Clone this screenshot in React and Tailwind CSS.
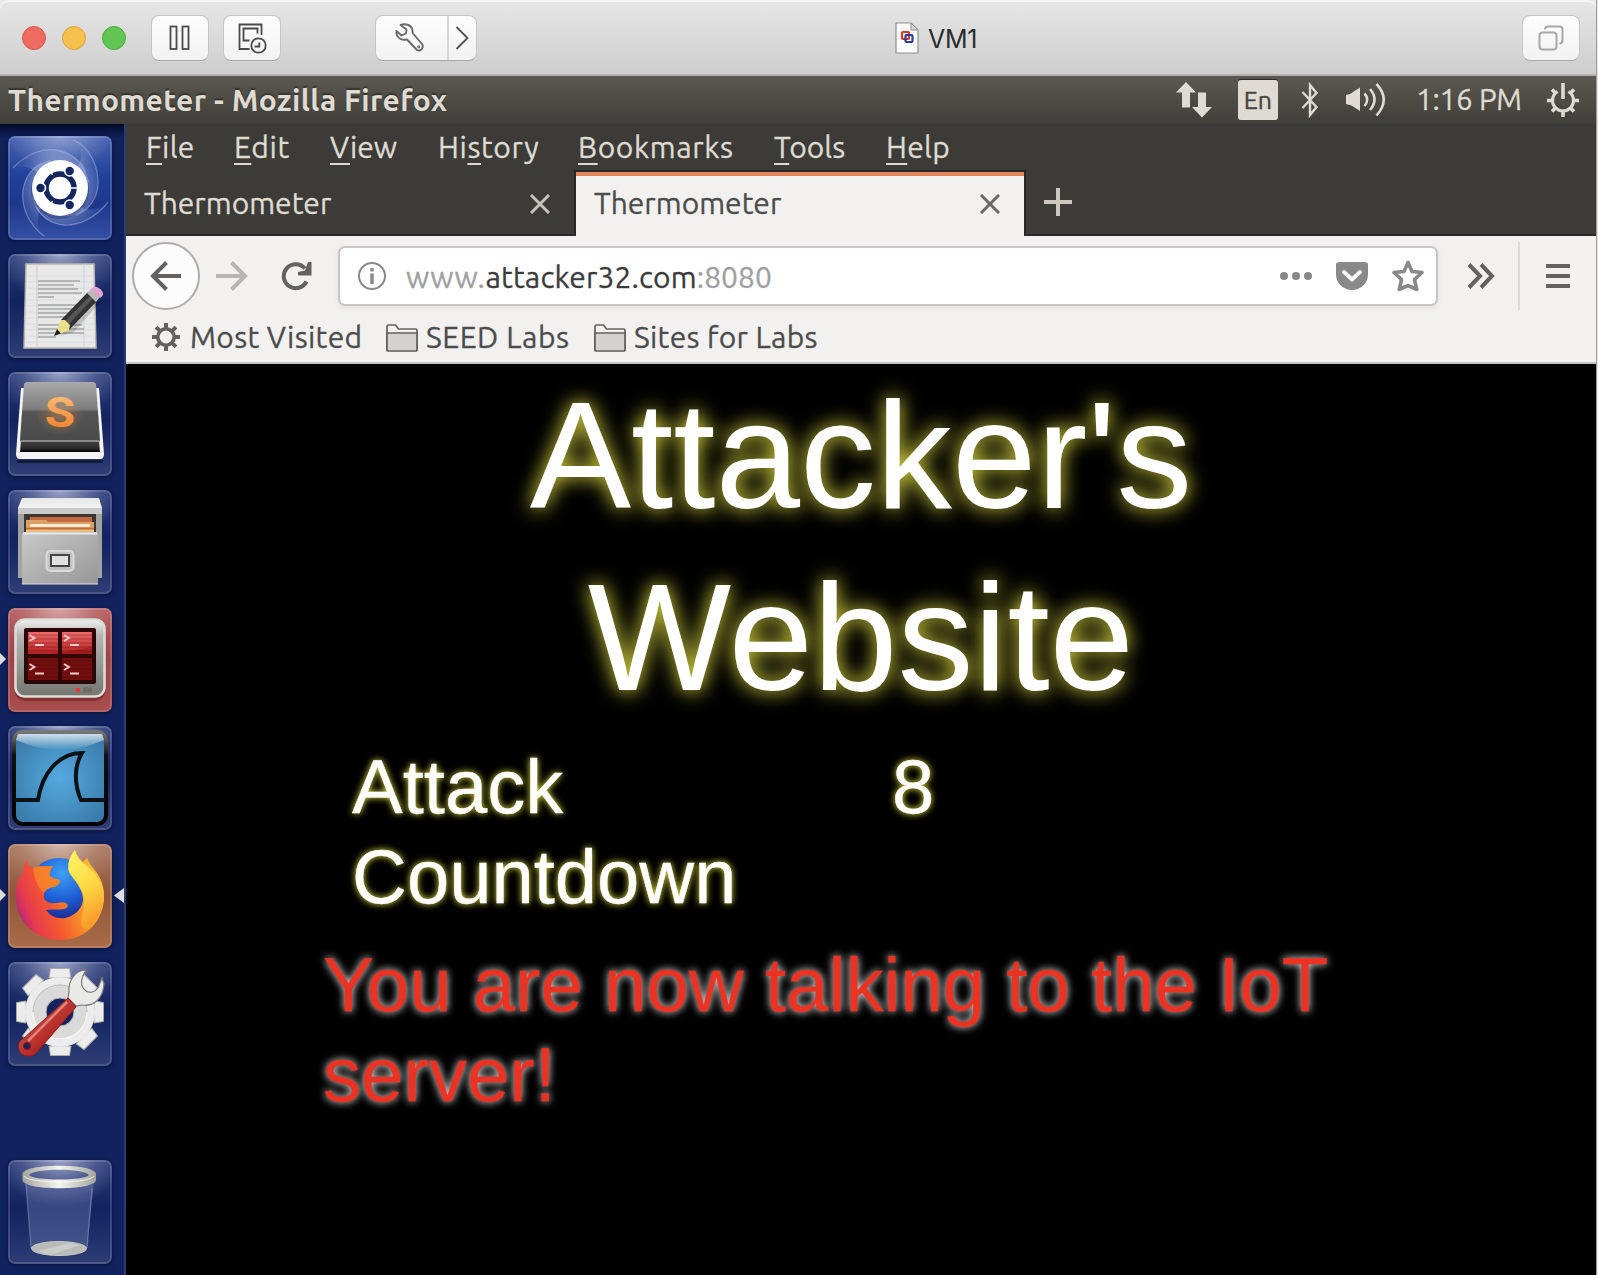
import React from "react";

const MENU = [
  ["", "F", "ile", "w-[88px] tracking-[0.3px]"],
  ["", "E", "dit", "w-[96px] tracking-[0.7px]"],
  ["", "V", "iew", "w-[108px]"],
  ["Hi", "s", "tory", "w-[140px] tracking-[0.6px]"],
  ["", "B", "ookmarks", "w-[196px] tracking-[0.6px]"],
  ["", "T", "ools", "w-[112px]"],
  ["", "H", "elp", "w-[80px] tracking-[0.3px]"],
];

/* ---------- window title bar ---------- */

function MacButton({ className = "", children }) {
  return (
    <div
      className={`flex h-[46px] items-center justify-center rounded-[8px] border border-[#c4c4c4] border-b-[#a9a9a9] bg-gradient-to-b from-[#fdfdfd] to-[#f2f2f2] ${className}`}
    >
      {children}
    </div>
  );
}

function TitleBar() {
  return (
    <div className="flex h-[76px] items-center rounded-t-[9px] border-t-2 border-b-2 border-t-[#f4f4f4] border-b-[#b1b1b1] bg-gradient-to-b from-[#e6e6e6] to-[#cecece] pr-[16px] pl-[22px]">
      <div className="flex gap-4">
        <div className="size-6 rounded-full border border-[#d9564c] bg-[#ee6b60]" />
        <div className="size-6 rounded-full border border-[#dba33a] bg-[#f5c04e]" />
        <div className="size-6 rounded-full border border-[#4dab3f] bg-[#61c654]" />
      </div>
      <MacButton className="ml-[25px] w-[58px]">
        <svg width="22" height="26" viewBox="0 0 22 26" fill="none" stroke="#4a4a4a" strokeWidth="1.8">
          <rect x="1.500" y="1.500" width="6" height="22.500" />
          <rect x="13.500" y="1.500" width="6" height="22.500" />
        </svg>
      </MacButton>
      <MacButton className="ml-[14px] w-[58px]">
        <svg width="30" height="32" viewBox="0 0 30 32" fill="none" stroke="#4a4a4a" strokeWidth="1.8">
          <path d="M24.500 13V2.500H2.500V27h10M20.500 11.500V6.500H6.500V18.500h6" />
          <circle cx="21.500" cy="23.500" r="7.200" />
          <path d="M22.300 20.500V24.500H17.500" />
        </svg>
      </MacButton>
      <MacButton className="ml-[94px] w-[102px]">
        <div className="flex h-full w-[71px] items-center justify-center pr-[3px]">
          <svg width="30" height="30" viewBox="0 0 30 30" fill="none" stroke="#6a6a6a" strokeWidth="1.9" strokeLinejoin="round">
            <path d="M5.500 2C10 .300 16 1.500 17.300 6.500C17.800 8.500 17.300 9.500 18 10.500L27 21C29.300 24.500 25.500 29 22 27L12 16.500C5.500 18 .500 13.500 1.500 8L6.500 12.500L11 10.500L11.500 6.500Z" />
            <circle cx="23.800" cy="23.700" r=".6" />
          </svg>
        </div>
        <div className="flex h-full flex-1 items-center border-l-2 border-[#d6d6d6] pl-[6px]">
          <svg width="14" height="24" viewBox="0 0 14 24" fill="none" stroke="#4f4f4f" strokeWidth="1.8">
            <path d="M1.500 1L12.500 12L1.500 23" />
          </svg>
        </div>
      </MacButton>
      <svg className="ml-[418px]" width="24" height="32" viewBox="0 0 24 32">
        <path d="M1 1H16L23 8V31H1Z" fill="#fdfdfd" stroke="#8f8f8f" strokeWidth="1.200" />
        <path d="M16 1V8H23Z" fill="#d8d8d8" stroke="#8f8f8f" strokeWidth="1" />
        <rect x="7" y="10" width="7" height="7" rx="1" fill="none" stroke="#d8392b" strokeWidth="2.200" />
        <rect x="10.500" y="13" width="7" height="7" rx="1" fill="none" stroke="#24408e" strokeWidth="2.200" />
      </svg>
      <div className="mt-[3px] ml-[9px] font-['Inter',sans-serif] text-[25px] tracking-[-0.3px] text-[#2c2c2c]">VM1</div>
      <MacButton className="ml-auto w-[58px]">
        <svg width="26" height="26" viewBox="0 0 26 26" fill="none" stroke="#a8a8a8" strokeWidth="2">
          <rect x="1.500" y="7.500" width="17" height="17" rx="3" />
          <path d="M7 4.500C7 2.500 8.500 1.500 10 1.500H21.500C23.500 1.500 24.500 2.500 24.500 4.500V15C24.500 17 23.500 18.500 21.500 18.500" />
        </svg>
      </MacButton>
    </div>
  );
}

/* ---------- Unity top panel ---------- */

function TopPanel() {
  return (
    <div className="flex h-12 items-center bg-gradient-to-b from-[#5b5950] to-[#403f3a] pl-[8px] text-[30px] text-[#dfdbd2]">
      <div className="w-[460px] font-bold tracking-[0.38px] whitespace-nowrap [text-shadow:0_-2px_1px_rgba(20,20,20,.45)]">
        Thermometer - Mozilla Firefox
      </div>
      <svg className="ml-[708px]" width="36" height="36" viewBox="0 0 36 36" fill="#dfdbd2">
        <path d="M10 0L20 10.500H14V25.500H6V10.500H0Z" />
        <path d="M26 35.500L16 25H22V10.500H30V25H36Z" />
      </svg>
      <div className="ml-[26px] flex h-10 w-10 items-center justify-center rounded-[3px] bg-[#dfdbd2] pt-[2px] text-[25px] text-[#47463f] shadow-[0_-1px_0_#2b2a26] [-webkit-text-stroke:.4px]">
        En
      </div>
      <svg className="ml-[23px]" width="18" height="36" viewBox="0 0 18 36" fill="none" stroke="#dfdbd2" strokeWidth="2.400">
        <path d="M1.500 10L15.500 25L9 33V3L15.500 11L1.500 26" />
      </svg>
      <svg className="ml-[27px]" width="42" height="36" viewBox="0 0 42 36">
        <path d="M0 13C2.500 12.500 5 12 7 10L14 5.500V29L7 24.500C5 23 2.500 22.500 0 22Z" fill="#dfdbd2" />
        <g fill="none" stroke="#dfdbd2" strokeWidth="2.600">
          <path d="M18.500 11.500Q24 17.500 18.500 24" />
          <path d="M24 7Q33 17.500 24 28" />
          <path d="M30.500 2Q45 17.500 30.500 33.500" />
        </g>
      </svg>
      <div className="ml-[28px] w-[108px] text-[29.5px] tracking-[-0.2px] whitespace-nowrap [-webkit-text-stroke:.3px]">1:16 PM</div>
      <svg className="ml-[22px]" width="34" height="36" viewBox="0 0 34 36">
        <path d="M11.500 9.500A10.500 10.500 0 1 0 22.500 9.500" fill="none" stroke="#dfdbd2" strokeWidth="3.200" />
        <path d="M17 1V17M17 29V35M1 18.500H7M27 18.500H33M6 7.500L9 10.500M28 7.500L25 10.500M6 29.500L9 26.500M28 29.500L25 26.500" fill="none" stroke="#dfdbd2" strokeWidth="3.600" />
      </svg>
    </div>
  );
}

/* ---------- launcher ---------- */

const TILE_BG = {
  blue: "bg-[radial-gradient(ellipse_50%_35%_at_50%_0%,rgba(200,210,240,.55),transparent_100%),linear-gradient(#4862ae_0%,#20409a_40%,#1d378c_65%,#3550a4_100%)]",
  navy: "bg-[radial-gradient(ellipse_60%_45%_at_50%_0%,rgba(190,198,225,.75),rgba(150,160,200,.28)_60%,transparent_100%),linear-gradient(#2c3c78_0%,#122360_45%,#1c2d69_70%,#2f3e74_100%)]",
  red: "bg-[radial-gradient(ellipse_60%_45%_at_50%_0%,rgba(225,190,190,.75),rgba(210,150,150,.3)_60%,transparent_100%),linear-gradient(#b05a5c,#9d4346_50%,#a84c4d)]",
  brown: "bg-[radial-gradient(ellipse_60%_45%_at_50%_0%,rgba(225,205,195,.75),rgba(200,165,150,.3)_60%,transparent_100%),linear-gradient(#a8765f,#8f5638_50%,#a96c49)]",
};

function Tile({ bg, left, right, children }) {
  return (
    <div className="relative flex h-[104px] w-[124px] shrink-0 pl-[8px]">
      {left && (
        <svg className="absolute top-[45px] left-0" width="6" height="12" viewBox="0 0 6 12">
          <path d="M0 0L6 6L0 12Z" fill="#dedede" />
        </svg>
      )}
      <div className={`size-[104px] rounded-[7px] shadow-[inset_0_0_0_2px_rgba(255,255,255,.14),0_1px_4px_rgba(0,0,20,.5)] ${TILE_BG[bg]}`}>
        <svg width="104" height="104" viewBox="0 0 104 104">{children}</svg>
      </div>
      {right && (
        <svg className="absolute top-[44px] right-0" width="10" height="15" viewBox="0 0 10 15">
          <path d="M10 0L0 7.500L10 15Z" fill="#dedede" />
        </svg>
      )}
    </div>
  );
}

function DashIcon() {
  return (
    <g>
      <defs>
        <radialGradient id="swirl" gradientUnits="userSpaceOnUse" cx="52" cy="52" r="50">
          <stop offset=".3" stopColor="#dfe6fa" stopOpacity=".55" />
          <stop offset=".8" stopColor="#c5d0f2" stopOpacity=".12" />
          <stop offset="1" stopColor="#c5d0f2" stopOpacity="0" />
        </radialGradient>
      </defs>
      <g fill="url(#swirl)">
        <path d="M5 32C18 18 34 12 48 14C66 17 78 30 81 46L52 52L26 34C18 30 10 30 5 32Z" />
        <path d="M66 4C82 12 91 30 90 50C88 68 76 78 60 81L52 52L70 30C76 20 72 10 66 4Z" />
        <path d="M100 66C88 82 70 90 56 89C38 88 27 76 24 60L52 52L74 72C84 76 94 72 100 66Z" />
        <path d="M36 100C20 88 13 70 15 54C17 38 28 28 42 24L52 52L32 74C28 84 30 94 36 100Z" />
      </g>
      <g fill="none" stroke="#c2cdf0" strokeOpacity=".4" strokeWidth="1.300">
        <path d="M5 32C18 18 34 12 48 14C62 16 73 25 78 36" />
        <path d="M66 4C82 12 91 30 90 50C88 66 78 75 68 79" />
        <path d="M100 66C88 82 70 90 56 89C44 88 34 81 28 71" />
        <path d="M36 100C20 88 13 70 15 54C17 42 24 32 34 27" />
      </g>
      <circle cx="52" cy="54" r="29" fill="#15265f" opacity=".35" />
      <circle cx="52" cy="52" r="28" fill="#fff" />
      <circle cx="52" cy="52" r="14" fill="none" stroke="#14265f" strokeWidth="5.500" />
      <path d="M44.500 39L42.500 35.500M44.500 65L42.500 68.500" stroke="#fff" strokeWidth="1.500" />
      <g fill="#14265f" stroke="#fff" strokeWidth="1.600">
        <circle cx="32.500" cy="52" r="5" />
        <circle cx="61.700" cy="35" r="5" />
        <circle cx="61.700" cy="69" r="5" />
      </g>
      <path d="M63 52H71" stroke="#fff" strokeWidth="1.500" />
    </g>
  );
}

function EditorIcon() {
  const rows = [26, 30, 34, 38, 42, 50, 54, 58, 62, 70, 74, 78, 82];
  const len = [42, 36, 40, 44, 16, 42, 34, 36, 30, 44, 46, 46, 18];
  return (
    <g>
      <path d="M18 10H86L88 94H16Z" fill="#e8e8e6" stroke="#b9b5ad" strokeWidth="1.500" />
      <path d="M19 22H85M19 28H85M19 34H85M19 40H85M19 46H85M19 52H85M19 58H85M18 64H86M18 70H86M18 76H86M18 82H86M18 88H86" stroke="#d3dbe8" strokeWidth=".8" />
      <path d="M29 11V93" stroke="#e6c9cb" strokeWidth="1.200" />
      <path d="M76 11V93" stroke="#cdd6e8" strokeWidth="1.200" />
      {rows.map((y, i) => (
        <path key={y} d={`M30 ${y + 1}h${len[i]}`} stroke="#a6a6a4" strokeWidth="1.500" />
      ))}
      <path d="M52 82L66 78L92 48L86 44Z" fill="#000" opacity=".16" />
      <path d="M47 81L53 66L61 76Z" fill="#e8d97b" />
      <path d="M53 66L80 38L89 47L61 76Z" fill="#333" />
      <path d="M56 68L83 41L85.500 44L59 72Z" fill="#565656" />
      <path d="M53 66L57 66L62 71L61 76L51 80L49 76Z" fill="#ecdf8c" />
      <path d="M46 82L49 75L53 79.500Z" fill="#222" />
      <path d="M79 39L83 35L92 43L88 48Z" fill="#b9b9b9" />
      <path d="M83 35C86 31 91 33 94 37C96 40 95 42 92 44Z" fill="#e3a3cc" />
    </g>
  );
}

function SublimeIcon() {
  return (
    <g>
      <defs>
        <linearGradient id="keyTop" x1="0" y1="0" x2="0" y2="1">
          <stop offset="0" stopColor="#a9a9a9" />
          <stop offset=".45" stopColor="#7d7d7d" />
          <stop offset=".5" stopColor="#545454" />
          <stop offset="1" stopColor="#4a4a4a" />
        </linearGradient>
        <linearGradient id="keyFront" x1="0" y1="0" x2="0" y2="1">
          <stop offset="0" stopColor="#444" />
          <stop offset=".7" stopColor="#2a2a2a" />
          <stop offset="1" stopColor="#000" />
        </linearGradient>
        <linearGradient id="keyS" x1="0" y1="0" x2="0" y2="1">
          <stop offset="0" stopColor="#fbc98a" />
          <stop offset="1" stopColor="#f2761b" />
        </linearGradient>
        <radialGradient id="keyGlow">
          <stop offset="0" stopColor="#e0924a" stopOpacity=".45" />
          <stop offset="1" stopColor="#e0924a" stopOpacity="0" />
        </radialGradient>
      </defs>
      <path d="M10 88H94L95 91H9Z" fill="#000" opacity=".5" />
      <path d="M13 16H91L96 82Q96 87 92 87H12Q8 87 8 82Z" fill="#f4f4f4" />
      <path d="M13 68H91L92 80H12Z" fill="url(#keyFront)" />
      <path d="M18 10H86L88 12L92 68L91 70H13L12 68L16 12Z" fill="url(#keyTop)" />
      <path d="M13 69H91" stroke="#8a8a8a" strokeWidth="2" />
      <ellipse cx="52" cy="43" rx="24" ry="20" fill="url(#keyGlow)" />
      <text transform="translate(52 54.500) scale(1.15 1)" x="0" y="0" textAnchor="middle" fontFamily="Roboto, sans-serif" fontWeight="700" fontSize="43" fill="url(#keyS)">S</text>
    </g>
  );
}

function FilesIcon() {
  return (
    <g>
      <defs>
        <linearGradient id="cabFront" x1="0" y1="0" x2="1" y2="1">
          <stop offset="0" stopColor="#c9c9c9" />
          <stop offset="1" stopColor="#979797" />
        </linearGradient>
        <linearGradient id="cabLid" x1="0" y1="0" x2="0" y2="1">
          <stop offset="0" stopColor="#e6e6e6" />
          <stop offset="1" stopColor="#f4f4f4" />
        </linearGradient>
      </defs>
      <path d="M10 18H94V88H10Z" fill="#a3a3a3" />
      <path d="M14 8H91L94 18H10Z" fill="url(#cabLid)" />
      <path d="M10 18H94V24H10Z" fill="#c9c9c9" />
      <rect x="16" y="24" width="72" height="20" fill="#3b3735" />
      <path d="M22 27H84V44H20Z" fill="#c46a42" />
      <path d="M18 30H38L40 32H86V44H18Z" fill="#dba160" />
      <path d="M22 35.500H82" stroke="#fff6ea" strokeWidth="2.500" />
      <path d="M18 38.500H86" stroke="#c96a3e" strokeWidth="1.500" />
      <path d="M18 40H86V44H18Z" fill="#e9bf82" />
      <path d="M16 42H88L90 45V94H14V45Z" fill="url(#cabFront)" />
      <path d="M15 43.500H89" stroke="#e8e8e8" strokeWidth="2" />
      <path d="M14 94H90" stroke="#dedede" strokeWidth="1" />
      <rect x="38.500" y="61" width="27" height="20" rx="4" fill="#c2c2c2" stroke="#dadada" strokeWidth="2" />
      <rect x="43" y="65" width="18" height="11" fill="#e0e0e0" stroke="#444" strokeWidth="2" />
    </g>
  );
}

function TerminatorIcon() {
  return (
    <g>
      <defs>
        <linearGradient id="bezel" x1="0" y1="0" x2="0" y2="1">
          <stop offset="0" stopColor="#f2f2f0" />
          <stop offset=".2" stopColor="#b5b6b2" />
          <stop offset="1" stopColor="#74766f" />
        </linearGradient>
        <linearGradient id="termA" x1="0" y1="0" x2="0" y2="1">
          <stop offset="0" stopColor="#ee6a6a" />
          <stop offset="1" stopColor="#b31f1f" />
        </linearGradient>
      </defs>
      <rect x="7" y="13" width="90" height="80" rx="10" fill="#400" opacity=".35" />
      <rect x="7.500" y="11.500" width="89" height="77" rx="9" fill="url(#bezel)" stroke="#dddeda" strokeWidth="2.500" />
      <rect x="16" y="20" width="72" height="56" rx="2" fill="#2c0606" />
      <rect x="20" y="24" width="30" height="22" fill="url(#termA)" />
      <rect x="54" y="24" width="30" height="22" fill="url(#termA)" />
      <rect x="20" y="50" width="30" height="22" fill="#7a1313" />
      <rect x="54" y="50" width="30" height="22" fill="#7a1313" />
      <path d="M20 27h64M20 31h64M20 35h64M20 39h64M20 43h64M20 53h64M20 57h64M20 61h64M20 65h64M20 69h64" stroke="#3a0505" strokeOpacity=".3" strokeWidth="1" />
      <path d="M20 50L84 39V72H20Z" fill="#500" opacity=".22" />
      <g fill="none" stroke="#f6caca" strokeWidth="1.800">
        <path d="M21.500 27l5 3l-5 3M27 37h9M56 27l5 3l-5 3M62 37h9M21.500 56l5 3l-5 3M27 65.500h9M56 56l5 3l-5 3M62 65.500h9" />
      </g>
      <rect x="68" y="80" width="4" height="4" fill="#e23b30" />
      <rect x="75" y="79.500" width="9" height="5" rx="1" fill="#6b6c67" />
    </g>
  );
}

function WiresharkIcon() {
  return (
    <g>
      <defs>
        <radialGradient id="sea" cx=".5" cy=".5" r=".6">
          <stop offset="0" stopColor="#55a9de" />
          <stop offset="1" stopColor="#3a7cab" />
        </radialGradient>
        <linearGradient id="gloss" x1="0" y1="0" x2="0" y2="1">
          <stop offset="0" stopColor="#fff" stopOpacity=".75" />
          <stop offset="1" stopColor="#fff" stopOpacity="0" />
        </linearGradient>
        <linearGradient id="sharkEdge" x1="0" y1="0" x2="0" y2="1">
          <stop offset="0" stopColor="#777" />
          <stop offset=".25" stopColor="#111" />
          <stop offset="1" stopColor="#000" />
        </linearGradient>
      </defs>
      <rect x="6" y="6" width="92" height="92" rx="9" fill="url(#sea)" stroke="url(#sharkEdge)" strokeWidth="4" />
      <path d="M10 8H94L96 14Q52 34 8 14Z" fill="url(#gloss)" />
      <path d="M7 74H30C34 48 50 27 74 27C66 40 66 58 73 74H97" fill="none" stroke="#0c1116" strokeWidth="4" />
    </g>
  );
}

function FirefoxIcon() {
  return (
    <g>
      <defs>
        <radialGradient id="globe" cx=".55" cy=".25" r=".8">
          <stop offset="0" stopColor="#3fa0f5" />
          <stop offset=".5" stopColor="#1f62d8" />
          <stop offset="1" stopColor="#1b1f86" />
        </radialGradient>
        <linearGradient id="fox" x1="0" y1=".65" x2="1" y2=".25">
          <stop offset="0" stopColor="#b5287c" />
          <stop offset=".12" stopColor="#e63a4e" />
          <stop offset=".35" stopColor="#f4582f" />
          <stop offset=".65" stopColor="#fb9a28" />
          <stop offset="1" stopColor="#fdc93a" />
        </linearGradient>
        <linearGradient id="tail" x1="0" y1="0" x2=".3" y2="1">
          <stop offset="0" stopColor="#fff56a" />
          <stop offset=".55" stopColor="#fddb45" />
          <stop offset="1" stopColor="#faa02d" />
        </linearGradient>
      </defs>
      <circle cx="51" cy="45" r="31" fill="url(#globe)" />
      <path
        d="M19 16C19 20 21 23 25 24C31 21 38 23 45 22C42 26 41 29 42 32C45 35 49 35 52 36C52 40 49 42 46 43C42 43 37 46 36 50C35 55 38 58 43 59C48 60 53 57 58 59C61 61 60 64 56 65C50 66 44 65 38 66C42 72 49 75 57 74C67 72 74 65 75 56C75 45 66 36 61 28C59 21 61 13 67 6C69 11 71 15 75 18L79 14C81 18 83 22 86 25C93 33 97 45 96 54C95 79 76 96 53 96C28 96 9 79 8 55C7 43 10 34 15 29C15 24 16 19 19 16Z"
        fill="url(#fox)"
      />
      <path d="M25 24C31 21 38 23 45 22C42 26 41 29 42 32C45 35 49 35 52 36C52 40 49 42 46 43C42 43 38 45 36 49C30 44 26 34 25 24Z" fill="#f58a2c" opacity=".75" />
      <path d="M67 6C69 13 72 17 78 21C91 32 96 43 96 54C95 66 90 76 80 84C72 86 72 80 75 68C77 60 76 52 75 50C72 40 64 34 61 28C59 21 61 13 67 6Z" fill="url(#tail)" />
    </g>
  );
}

function SettingsIcon() {
  const teeth = [0, 45, 90, 135, 180, 225, 270, 315];
  return (
    <g>
      <defs>
        <linearGradient id="handle" x1="0" y1="0" x2="1" y2="1">
          <stop offset="0" stopColor="#e06a60" />
          <stop offset=".6" stopColor="#b32a25" />
          <stop offset="1" stopColor="#7e1714" />
        </linearGradient>
      </defs>
      <g transform="translate(52 50)">
        {teeth.map((a) => (
          <path key={a} d="M-11 -34L-9.500 -43.500H9.500L11 -34Z" fill="#ececec" stroke="#a9a9a9" strokeWidth="1" transform={`rotate(${a})`} />
        ))}
        <circle r="35" fill="#ececec" />
        <circle r="27" fill="#dadada" stroke="#bdbdbd" strokeWidth="1" />
        <path d="M-27 0A27 27 0 0 0 27 0" fill="none" stroke="#f7f7f7" strokeWidth="1.500" />
        <circle r="14" fill="#122360" stroke="#b5b5b5" strokeWidth="1" />
      </g>
      <path d="M78 8C68 8 60 18 61 30L60 36L68 44L74 43C86 45 95 36 96 22L94 16L90 26C86 31 80 32 76 27C72 23 73 15 78 8Z" fill="#e9e9e7" stroke="#7d7d7b" strokeWidth="1.200" />
      <path d="M60 36L68 45L29 90C25 96 15 95 12 90C9 85 10 79 16 76Z" fill="url(#handle)" stroke="#8d1f1b" strokeWidth="1" />
      <path d="M59 40L20 79" stroke="#f0a097" strokeWidth="2.500" opacity=".7" />
      <circle cx="19" cy="84" r="3.500" fill="#1a2557" stroke="#7e1714" strokeWidth="1" />
    </g>
  );
}

function TrashIcon() {
  return (
    <g>
      <defs>
        <linearGradient id="rim" x1="0" y1="0" x2="1" y2="0">
          <stop offset="0" stopColor="#a3a39d" />
          <stop offset=".5" stopColor="#f5f5f2" />
          <stop offset="1" stopColor="#a3a39d" />
        </linearGradient>
      </defs>
      <path d="M18 22L23 88Q51 100 79 88L86 22Z" fill="#8f9bcb" opacity=".3" />
      <path d="M18 24L23 88M84 28L79 88" stroke="#aab4d8" strokeWidth="1.300" opacity=".4" />
      <ellipse cx="51" cy="88.500" rx="27.500" ry="7" fill="#b9bbb8" stroke="#c6c7c4" strokeWidth="1" />
      <path d="M30 91L62 83L72 85L42 95Z" fill="#d3d4d2" opacity=".7" />
      <path fillRule="evenodd" d="M14.500 14C14.500 3 88 3 88 14V20C88 31 14.500 31 14.500 20ZM21 15C26 21 76 21 81 15C76 8 26 8 21 15Z" fill="url(#rim)" />
      <path d="M16 16C20 24 82 24 86 16" fill="none" stroke="#fff" strokeWidth="1" opacity=".7" />
    </g>
  );
}

function Launcher() {
  return (
    <div className="flex w-[126px] shrink-0 flex-col gap-[14px] border-r-2 border-[#2d3c6e] bg-[linear-gradient(#040a2a_0px,#10215c_14px,#10225f_100%)] pt-[12px] pb-[11px]">
      <Tile bg="blue"><DashIcon /></Tile>
      <Tile bg="navy"><EditorIcon /></Tile>
      <Tile bg="navy"><SublimeIcon /></Tile>
      <Tile bg="navy"><FilesIcon /></Tile>
      <Tile bg="red" left><TerminatorIcon /></Tile>
      <Tile bg="navy"><WiresharkIcon /></Tile>
      <Tile bg="brown" left right><FirefoxIcon /></Tile>
      <Tile bg="navy"><SettingsIcon /></Tile>
      <div className="mt-auto">
        <Tile bg="navy"><TrashIcon /></Tile>
      </div>
    </div>
  );
}

/* ---------- Firefox window ---------- */

function CloseX({ className }) {
  return (
    <svg className={className} width="20" height="20" viewBox="0 0 20 20" fill="none" stroke="currentColor" strokeWidth="3">
      <path d="M1 1L19 19M19 1L1 19" />
    </svg>
  );
}

function Folder() {
  return (
    <svg className="mt-[2px]" width="32" height="28" viewBox="0 0 32 28" fill="#d3d2d0" stroke="#62615e" strokeWidth="1.700">
      <path d="M1 26.500V2.500Q1 1 2.500 1H9.500L12.500 5H29.500Q31 5 31 6.500V26.500Z" fill="#f2f1ef" />
      <path d="M1 9H31V25.500Q31 27 29.500 27H2.500Q1 27 1 25.500Z" />
    </svg>
  );
}

function Browser() {
  return (
    <div className="flex min-w-0 flex-1 flex-col bg-black [-webkit-text-stroke:.3px]">
      <div className="flex h-[46px] shrink-0 items-center bg-[#3c3b37] pl-[20px] text-[30px] text-[#dfdbd2]">
        {MENU.map(([a, u, b, w]) => (
          <div key={b} className={`${w} whitespace-nowrap`}>
            {a}
            <span className="underline decoration-2 underline-offset-[5px]">{u}</span>
            {b}
          </div>
        ))}
      </div>

      <div className="flex h-[66px] shrink-0 bg-[#3c3b37] text-[30px]">
        <div className="flex w-[448px] items-center border-b-2 border-[#2a2926] pt-[3px] pl-[18px] text-[#dfdbd2]">
          Thermometer
          <CloseX className="mr-[24px] ml-auto text-[#c8c3ba]" />
        </div>
        <div className="flex w-[452px] border-x-2 border-t-2 border-[#2a2926]">
          <div className="flex flex-1 items-center border-t-4 border-[#e48860] bg-[#f2f1ef] pb-[5px] pl-[18px] text-[#4c4c4c]">
            Thermometer
            <CloseX className="mr-[24px] ml-auto text-[#6b6a67]" />
          </div>
        </div>
        <div className="flex flex-1 items-start border-b-2 border-[#2a2926] pt-[18px] pl-[18px]">
          <svg width="28" height="28" viewBox="0 0 28 28" stroke="#cdc7be" strokeWidth="4">
            <path d="M14 0V28M0 14H28" />
          </svg>
        </div>
      </div>

      <div className="flex h-[80px] shrink-0 items-center bg-[#f2f1ef] pl-[6px]">
        <div className="flex size-[68px] items-center justify-center rounded-full border-2 border-[#aeadab] bg-[#fcfcfc]">
          <svg width="32" height="30" viewBox="0 0 32 30" fill="none" stroke="#636261" strokeWidth="4">
            <path d="M31 15H3M16.500 1.500L3 15L16.500 28.500" />
          </svg>
        </div>
        <svg className="ml-[16px]" width="32" height="30" viewBox="0 0 32 30" fill="none" stroke="#b7b6b4" strokeWidth="4">
          <path d="M0 15H29M15.500 1.500L29 15L15.500 28.500" />
        </svg>
        <svg className="ml-[33px]" width="32" height="30" viewBox="0 0 32 30">
          <path d="M25.500 20.500A12 12 0 1 1 24 7.500" fill="none" stroke="#636261" strokeWidth="4" />
          <path d="M30.500 1V14.500H17V11L24 9.500L27 1Z" fill="#636261" />
        </svg>
        <div className="ml-[25px] flex h-[60px] w-[1100px] items-center rounded-[7px] border-2 border-[#c9c6c3] bg-white pl-[18px] text-[30px] shadow-[0_2px_5px_rgba(0,0,0,.07)]">
          <svg width="28" height="28" viewBox="0 0 28 28" fill="none" stroke="#8a8987">
            <circle cx="14" cy="14" r="13" strokeWidth="2" />
            <path d="M14 11.500V22M14 6V9.500" strokeWidth="3.500" />
          </svg>
          <div className="mt-[3px] ml-[20px] whitespace-nowrap text-[#a09fa0]">
            <span className="tracking-[0.5px]">www.</span>
            <span className="tracking-[0.14px] text-[#3b3b3d]">attacker32.com</span>:8080
          </div>
          <svg className="mr-[24px] ml-auto" width="32" height="8" viewBox="0 0 32 8" fill="#898989">
            <circle cx="4" cy="4" r="4" />
            <circle cx="16" cy="4" r="4" />
            <circle cx="28" cy="4" r="4" />
          </svg>
          <svg className="mr-[23px]" width="32" height="28" viewBox="0 0 32 28">
            <path d="M3 0H29Q32 0 32 3V12.500C32 21 25 28 16 28S0 21 0 12.500V3Q0 0 3 0Z" fill="#898989" />
            <path d="M8 10L16 17.500L24 10" fill="none" stroke="#fff" strokeWidth="3.800" strokeLinecap="round" strokeLinejoin="round" />
          </svg>
          <svg className="mr-[11px]" width="34" height="34" viewBox="0 0 34 34" fill="none" stroke="#898989" strokeWidth="3.600" strokeLinejoin="round">
            <path d="M17 3.500L21 12.500L31 13.500L23.500 20.500L25.800 30.500L17 26.500L8.200 30.500L10.500 20.500L3 13.500L13 12.500Z" />
          </svg>
        </div>
        <svg className="ml-[29px]" width="28" height="26" viewBox="0 0 28 26" fill="none" stroke="#636261" strokeWidth="4">
          <path d="M2 1.500L13 13L2 24.500M14 1.500L25 13L14 24.500" />
        </svg>
        <div className="ml-[23px] h-[68px] w-[2px] bg-[#dbdad8]" />
        <svg className="ml-[26px]" width="24" height="24" viewBox="0 0 24 24" stroke="#636261" strokeWidth="4">
          <path d="M0 2H24M0 12H24M0 22H24" />
        </svg>
      </div>

      <div className="flex h-[48px] shrink-0 items-center border-b-2 border-[#c5c4c0] bg-[#f2f1ef] pb-[4px] pl-[26px] text-[30px] whitespace-nowrap text-[#4c4c4c]">
        <svg width="28" height="28" viewBox="0 0 28 28" fill="none" stroke="#636261">
          <circle cx="14" cy="14" r="8.200" strokeWidth="3.600" />
          <path d="M14 0V5M14 23V28M0 14H5M23 14H28M4.100 4.100L7.600 7.600M20.400 20.400L23.900 23.900M4.100 23.900L7.600 20.400M20.400 7.600L23.900 4.100" strokeWidth="4" />
        </svg>
        <div className="ml-[10px] w-[196px] tracking-[0.3px]">Most Visited</div>
        <Folder />
        <div className="ml-[8px] w-[168px] tracking-[0.55px]">SEED Labs</div>
        <Folder />
        <div className="ml-[8px] tracking-[0.3px]">Sites for Labs</div>
      </div>

      <div className="flex-1 overflow-hidden bg-black font-['Liberation_Sans',Arial,sans-serif] text-white">
        <h1 className="mx-auto w-[800px] text-center text-[152px] leading-[182px] [-webkit-text-stroke:0] [text-shadow:0_0_20px_#f7f349]">
          Attacker&apos;s Website
        </h1>
        <div className="mt-[14px] flex pl-[226px] text-[76px] leading-[90px] [text-shadow:0_0_7px_#f7f349]">
          <div className="w-[540px]">
            Attack
            <br />
            Countdown
          </div>
          <div>8</div>
        </div>
        <div className="mt-[18px] w-[1100px] pl-[197px] text-[76.2px] leading-[90px] whitespace-nowrap text-[#eb3323] [text-shadow:0_0_8px_#fff]">
          You are now talking to the IoT
          <br />
          server!
        </div>
      </div>
    </div>
  );
}

export default function App() {
  return (
    <div className="flex h-[1275px] w-[1598px] overflow-hidden bg-[#e9e9e9] font-['Ubuntu','Noto_Sans',sans-serif]">
      <div className="flex w-[1597px] flex-col border-r border-[#9c9c9c]">
        <TitleBar />
        <TopPanel />
        <div className="flex min-h-0 flex-1">
          <Launcher />
          <Browser />
        </div>
      </div>
    </div>
  );
}
